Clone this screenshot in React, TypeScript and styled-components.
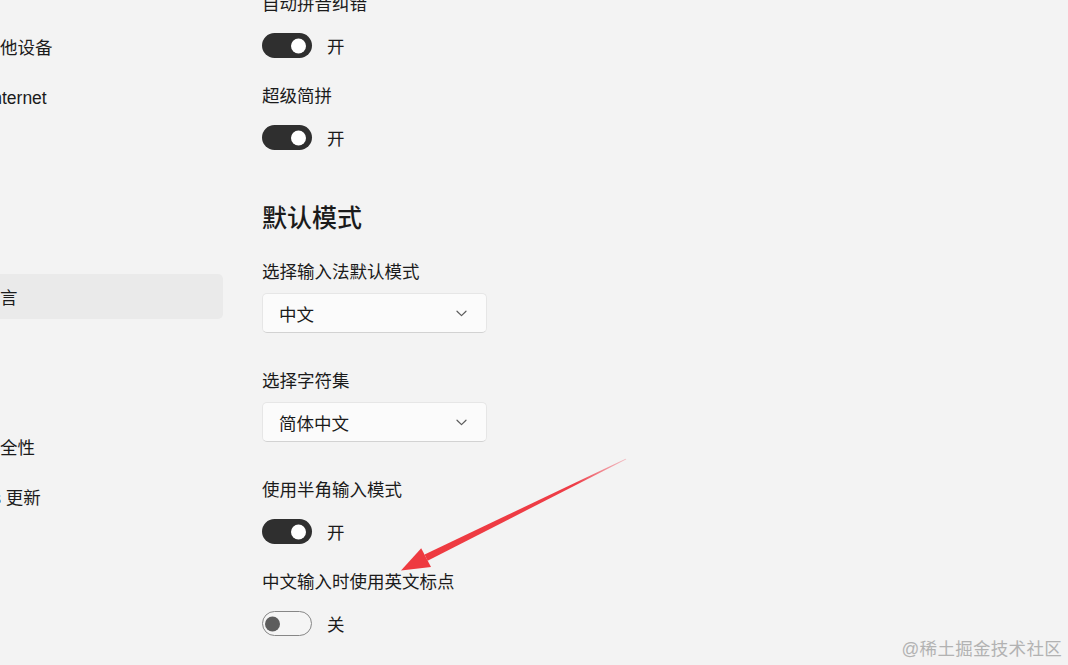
import React from "react";
import styled, { createGlobalStyle } from "styled-components";

const GlobalStyle = createGlobalStyle`
  html, body {
    margin: 0;
    padding: 0;
    background: #f3f3f3;
    overflow: hidden;
  }
  body {
    font-family: "Liberation Sans", "Noto Sans CJK SC", sans-serif;
    color: #1b1b1b;
  }
`;

const navItems = [
  "蓝牙和其他设备",
  "网络和 Internet",
  "个性化",
  "应用",
  "帐户",
  "时间和语言",
  "游戏",
  "辅助功能",
  "隐私和安全性",
  "Windows 更新",
];

type Setting =
  | { kind: "toggle"; label: string; on: boolean }
  | { kind: "select"; label: string; value: string };

const topSettings: Setting[] = [
  { kind: "toggle", label: "自动拼音纠错", on: true },
  { kind: "toggle", label: "超级简拼", on: true },
];

const modeSettings: Setting[] = [
  { kind: "select", label: "选择输入法默认模式", value: "中文" },
  { kind: "select", label: "选择字符集", value: "简体中文" },
  { kind: "toggle", label: "使用半角输入模式", on: true },
  { kind: "toggle", label: "中文输入时使用英文标点", on: false },
];

function Toggle({ on }: { on: boolean }) {
  return (
    <ToggleRow>
      <Switch $on={on}>
        <Knob $on={on} />
      </Switch>
      <StateText>{on ? "开" : "关"}</StateText>
    </ToggleRow>
  );
}

function Select({ value }: { value: string }) {
  return (
    <SelectBox>
      <span>{value}</span>
      <svg width="11" height="7" viewBox="0 0 11 7">
        <path d="M1 1.2 L5.5 5.6 L10 1.2" fill="none" stroke="#5c5c5c" strokeWidth="1.2" strokeLinecap="round" strokeLinejoin="round" />
      </svg>
    </SelectBox>
  );
}

function SettingBlock({ s }: { s: Setting }) {
  return (
    <Block $kind={s.kind}>
      <Label>{s.label}</Label>
      {s.kind === "toggle" ? <Toggle on={s.on} /> : <Select value={s.value} />}
    </Block>
  );
}

export default function App() {
  return (
    <>
      <GlobalStyle />
      <Window>
        <Sidebar>
          <NavList>
            {navItems.map((item, i) => (
              <NavItem key={item} $active={i === 5}>
                {item}
              </NavItem>
            ))}
          </NavList>
        </Sidebar>
        <Content>
          <Scroller>
            {topSettings.map((s) => (
              <SettingBlock key={s.label} s={s} />
            ))}
            <Heading>默认模式</Heading>
            {modeSettings.map((s) => (
              <SettingBlock key={s.label} s={s} />
            ))}
          </Scroller>
        </Content>
        <Arrow width="1068" height="665" viewBox="0 0 1068 665">
          <defs>
            <linearGradient id="shaft" x1="626" y1="459" x2="426" y2="558" gradientUnits="userSpaceOnUse">
              <stop offset="0" stopColor="#f06a78" stopOpacity="0.4" />
              <stop offset="0.25" stopColor="#ee3d47" />
              <stop offset="1" stopColor="#ee3a40" />
            </linearGradient>
          </defs>
          <polygon points="626.4,459.3 625.6,458.7 424.6,554.5 427.6,560.7" fill="url(#shaft)" />
          <polygon points="401,570.5 421.2,548.2 431,567" fill="#ee3a40" />
        </Arrow>
        <Watermark>@稀土掘金技术社区</Watermark>
      </Window>
    </>
  );
}

const Window = styled.div`
  position: relative;
  display: flex;
  width: 1068px;
  height: 665px;
  overflow: hidden;
  background: #f3f3f3;
`;

const Sidebar = styled.nav`
  width: 223px;
  flex-shrink: 0;
  overflow: hidden;
`;

const NavList = styled.ul`
  list-style: none;
  margin: 24px 0 0 -110px;
  padding: 0;
  width: 333px;
  display: flex;
  flex-direction: column;
  gap: 5px;
`;

const NavItem = styled.li<{ $active: boolean }>`
  height: 45px;
  display: flex;
  align-items: center;
  padding-left: 40px;
  border-radius: 5px;
  font-size: 17.5px;
  white-space: nowrap;
  background: ${(p) => (p.$active ? "#eaeaea" : "transparent")};
`;

const Content = styled.main`
  flex: 1;
  margin-left: 39px;
  overflow: hidden;
`;

const Scroller = styled.div`
  margin-top: -8px;
  display: flex;
  flex-direction: column;
`;

const Block = styled.section<{ $kind: "toggle" | "select" }>`
  display: flex;
  flex-direction: column;
  gap: ${(p) => (p.$kind === "toggle" ? "17px" : "9px")};
  margin-bottom: ${(p) => (p.$kind === "toggle" ? "26px" : "36px")};
`;

const Label = styled.div`
  font-size: 17.5px;
  line-height: 24px;
  height: 24px;
  white-space: nowrap;
`;

const Heading = styled.h2`
  margin: 25px 0 25px;
  font-size: 25px;
  font-weight: 500;
  line-height: 34px;
`;

const ToggleRow = styled.div`
  display: flex;
  align-items: center;
  gap: 15px;
  height: 25px;
`;

const Switch = styled.div<{ $on: boolean }>`
  position: relative;
  width: 50px;
  height: 25px;
  box-sizing: border-box;
  border-radius: 13px;
  background: ${(p) => (p.$on ? "#2f2f2f" : "#f5f5f5")};
  border: ${(p) => (p.$on ? "none" : "1.5px solid #878787")};
`;

const Knob = styled.div<{ $on: boolean }>`
  position: absolute;
  top: 50%;
  transform: translateY(-50%);
  width: 15px;
  height: 15px;
  border-radius: 50%;
  background: ${(p) => (p.$on ? "#ffffff" : "#5d5d5d")};
  ${(p) => (p.$on ? "right: 6px;" : "left: 2px;")}
`;

const StateText = styled.span`
  font-size: 17.5px;
`;

const SelectBox = styled.div`
  width: 225px;
  height: 40px;
  box-sizing: border-box;
  display: flex;
  align-items: center;
  justify-content: space-between;
  padding: 0 19px 0 16px;
  background: #fbfbfb;
  border: 1px solid #e6e6e6;
  border-bottom-color: #d2d2d2;
  border-radius: 5px;
  font-size: 17.5px;
`;

const Arrow = styled.svg`
  position: absolute;
  left: 0;
  top: 0;
  pointer-events: none;
`;

const Watermark = styled.div`
  position: absolute;
  right: 6px;
  bottom: 5px;
  font-size: 17.5px;
  color: #b2b2b2;
  letter-spacing: 0.3px;
`;
